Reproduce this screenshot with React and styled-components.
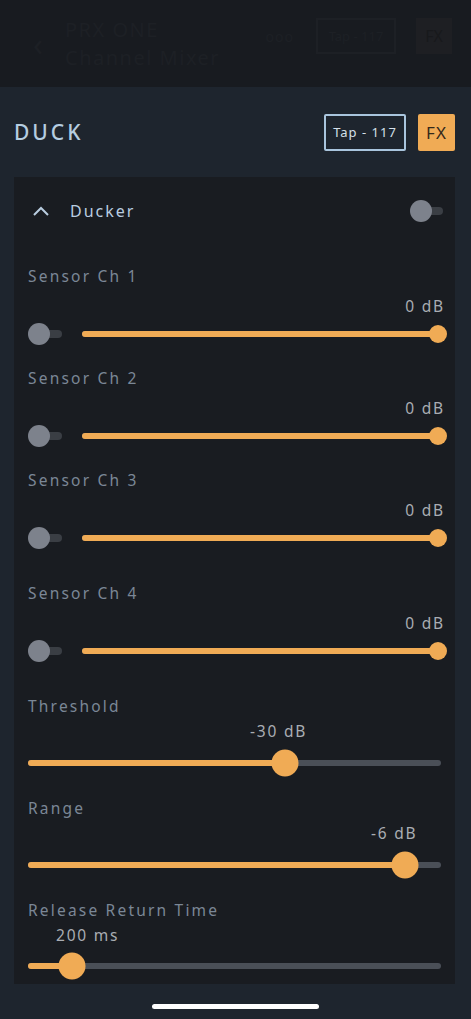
import React from "react";
import styled, { createGlobalStyle } from "styled-components";

const GlobalStyle = createGlobalStyle`
  html, body { margin: 0; padding: 0; background: #181b20; }
  body { font-family: "Noto Sans", "Open Sans", sans-serif; }
  * { box-sizing: border-box; }
`;

const Screen = styled.div`
  width: 471px;
  height: 1019px;
  display: flex;
  flex-direction: column;
  background: #181b20;
  overflow: hidden;
  position: relative;
`;

const DimHeader = styled.div`
  height: 87px;
  display: flex;
  align-items: center;
  padding: 0 19px 0 33px;
  color: #1d2025;
  flex-shrink: 0;
`;

const Back = styled.div`
  font-size: 32px;
  width: 32px;
  line-height: 1;
`;

const Titles = styled.div`
  flex: 1;
  display: flex;
  flex-direction: column;
  font-size: 20px;
  line-height: 28px;
  letter-spacing: 1.5px;
`;

const DimDots = styled.div`
  font-size: 14px;
  margin-right: 22px;
  letter-spacing: 1px;
  margin-bottom: 14px;
`;

const DimTap = styled.div`
  width: 80px;
  height: 36px;
  border: 2px solid #1d2025;
  display: flex;
  align-items: center;
  justify-content: center;
  font-size: 13px;
  margin-right: 20px;
  margin-bottom: 16px;
`;

const DimFx = styled.div`
  width: 36px;
  height: 36px;
  background: #1e1f23;
  display: flex;
  align-items: center;
  justify-content: center;
  font-size: 16px;
  margin-bottom: 16px;
  color: #18191c;
`;

const Sheet = styled.div`
  flex: 1;
  background: #1e252e;
  padding: 0 16px 0 14px;
  display: flex;
  flex-direction: column;
`;

const SheetHead = styled.div`
  height: 90px;
  display: flex;
  align-items: center;
`;

const Title = styled.h1`
  margin: 0;
  flex: 1;
  font-size: 21px;
  font-weight: 500;
  letter-spacing: 3px;
  color: #b5cde0;
`;

const TapBox = styled.div`
  width: 82px;
  height: 37px;
  border: 2px solid #a9c5dd;
  border-radius: 2px;
  display: flex;
  align-items: center;
  justify-content: center;
  color: #d5e0ea;
  font-size: 13px;
  letter-spacing: 1px;
  margin-right: 12px;
`;

const FxButton = styled.div`
  width: 37px;
  height: 37px;
  background: #f0ab55;
  border-radius: 2px;
  display: flex;
  align-items: center;
  justify-content: center;
  color: #33281a;
  font-size: 17px;
  letter-spacing: 1px;
`;

const Panel = styled.div`
  background: #191c21;
  height: 807px;
  padding: 0 10px 0 14px;
  display: flex;
  flex-direction: column;
`;

const DuckerRow = styled.div`
  height: 68px;
  display: flex;
  align-items: center;
  padding-left: 4px;
  padding-right: 2px;
`;

const DuckerName = styled.div`
  flex: 1;
  margin-left: 20px;
  color: #b9cde0;
  font-size: 16px;
  letter-spacing: 2px;
`;

const Toggle = styled.div`
  position: relative;
  width: ${(p) => p.$w}px;
  height: 22px;
  flex-shrink: 0;
  &::before {
    content: "";
    position: absolute;
    left: 8px;
    right: 0;
    top: 7px;
    height: 8px;
    border-radius: 4px;
    background: #3a3e44;
  }
  &::after {
    content: "";
    position: absolute;
    left: 0;
    top: 0;
    width: 22px;
    height: 22px;
    border-radius: 50%;
    background: #7d828c;
  }
`;

const Section = styled.div`
  height: ${(p) => p.$h}px;
  display: flex;
  flex-direction: column;
`;

const Label = styled.div`
  color: #7b8796;
  font-size: 15.5px;
  letter-spacing: 2.2px;
  line-height: 20px;
  margin-top: 21px;
`;

const ValueRow = styled.div`
  position: relative;
  height: 22px;
  margin-top: ${(p) => p.$top}px;
  color: #a9adb3;
  font-size: 15.5px;
  letter-spacing: 1.8px;
  line-height: 22px;
  text-align: ${(p) => (p.$right ? "right" : "left")};
`;

const FloatValue = styled.span`
  position: absolute;
  top: 0;
  white-space: nowrap;
`;

const SliderRow = styled.div`
  display: flex;
  align-items: center;
  height: 26px;
  margin-top: ${(p) => p.$top || 0}px;
  gap: 20px;
`;

const Track = styled.div`
  position: relative;
  flex: 1;
  height: 6px;
  border-radius: 3px;
  background: #4a4f57;
  margin-right: ${(p) => p.$mr || 0}px;
`;

const Fill = styled.div`
  position: absolute;
  left: 0;
  top: 0;
  bottom: 0;
  border-radius: 3px;
  background: #f0ab55;
`;

const Thumb = styled.div`
  position: absolute;
  top: 50%;
  width: ${(p) => p.$size}px;
  height: ${(p) => p.$size}px;
  border-radius: 50%;
  background: #f0ab55;
  transform: translate(-50%, -50%);
`;

const HomeBar = styled.div`
  position: absolute;
  left: 152px;
  bottom: 10px;
  width: 167px;
  height: 5px;
  border-radius: 3px;
  background: #ffffff;
`;

const sensors = [
  { name: "Sensor Ch 1", h: 102 },
  { name: "Sensor Ch 2", h: 102 },
  { name: "Sensor Ch 3", h: 113 },
  { name: "Sensor Ch 4", h: 113 },
];

const params = [
  { name: "Threshold", value: "-30 dB", pct: 62.2, labelAt: 222, h: 102 },
  { name: "Range", value: "-6 dB", pct: 91.3, labelAt: 343, h: 102 },
  { name: "Release Return Time", value: "200 ms", pct: 10.6, labelAt: 28, h: 100 },
];

function Slider({ pct, size, mr }) {
  return (
    <Track $mr={mr}>
      <Fill style={{ width: `${pct}%` }} />
      <Thumb $size={size} style={{ left: `${pct}%` }} />
    </Track>
  );
}

export default function App() {
  return (
    <Screen>
      <GlobalStyle />
      <DimHeader>
        <Back>‹</Back>
        <Titles>
          <span>PRX ONE</span>
          <span>Channel Mixer</span>
        </Titles>
        <DimDots>ooo</DimDots>
        <DimTap>Tap - 117</DimTap>
        <DimFx>FX</DimFx>
      </DimHeader>
      <Sheet>
        <SheetHead>
          <Title>DUCK</Title>
          <TapBox>Tap - 117</TapBox>
          <FxButton>FX</FxButton>
        </SheetHead>
        <Panel>
          <DuckerRow>
            <svg width="18" height="12" viewBox="0 0 18 12">
              <path d="M2 10 L9 3 L16 10" fill="none" stroke="#b9cde0" strokeWidth="2" />
            </svg>
            <DuckerName>Ducker</DuckerName>
            <Toggle $w={33} />
          </DuckerRow>
          {sensors.map((s) => (
            <Section key={s.name} $h={s.h}>
              <Label>{s.name}</Label>
              <ValueRow $right $top={9}>0 dB</ValueRow>
              <SliderRow $top={4}>
                <Toggle $w={34} />
                <Slider pct={98} size={18} />
              </SliderRow>
            </Section>
          ))}
          {params.map((p) => (
            <Section key={p.name} $h={p.h}>
              <Label>{p.name}</Label>
              <ValueRow $top={4}>
                <FloatValue style={{ left: `${p.labelAt}px` }}>{p.value}</FloatValue>
              </ValueRow>
              <SliderRow $top={8}>
                <Slider pct={p.pct} size={27} mr={4} />
              </SliderRow>
            </Section>
          ))}
        </Panel>
      </Sheet>
      <HomeBar />
    </Screen>
  );
}
